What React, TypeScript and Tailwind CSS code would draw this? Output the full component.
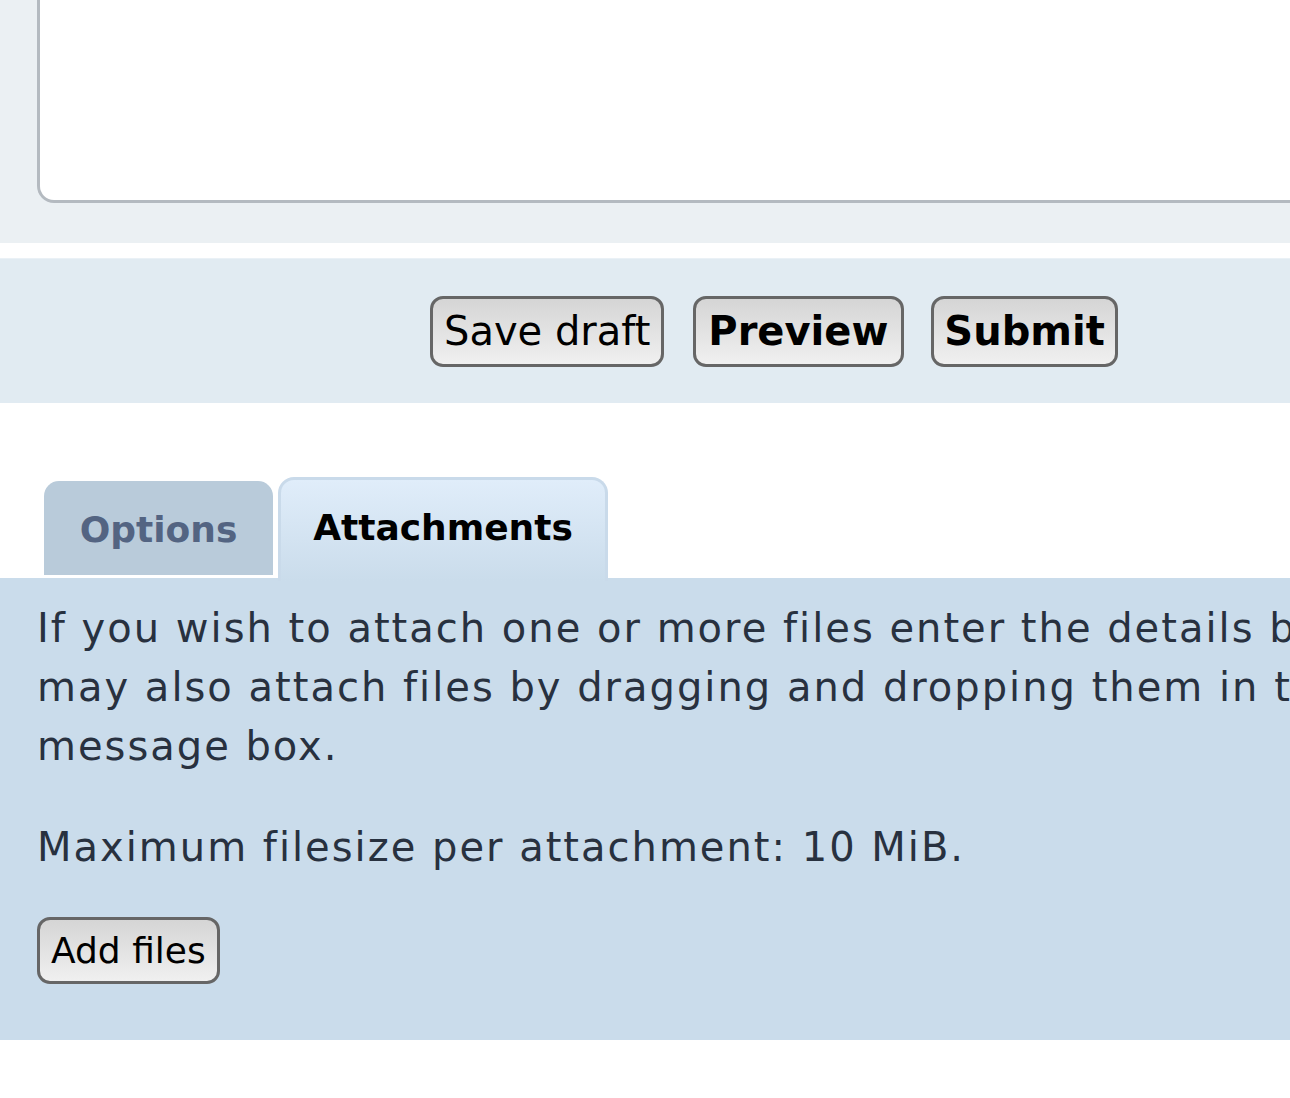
import React from "react";

const font = { fontFamily: '"DejaVu Sans", Verdana, sans-serif' };

function Btn({ children, bold, extra }: { children: React.ReactNode; bold?: boolean; extra?: string }) {
  return (
    <button
      className={
        "h-[71px] rounded-[13px] border-[3px] border-[#666666] bg-gradient-to-b from-[#d5d5d5] to-[#f0f0f0] text-black text-[40px] leading-none " +
        (bold ? "font-bold " : "font-normal ") +
        (extra ?? "px-[11px]")
      }
    >
      {children}
    </button>
  );
}

export default function App() {
  return (
    <div className="w-[1290px] h-[1098px] overflow-hidden bg-white" style={font}>
      <div className="h-[243px] bg-[#ebf0f3] pl-[37px] pb-[40px] flex flex-col justify-end">
        <div className="h-[260px] -mr-[40px] bg-white border-[3px] border-t-0 border-[#b4bac0] rounded-bl-[17px]" />
      </div>
      <div className="h-[15px]" />
      <div className="h-[145px] bg-[#e1ebf2] border-t border-[#eaf1f6] flex items-center pl-[430px]">
        <Btn>Save draft</Btn>
        <div className="w-[29px]" />
        <Btn bold extra="pl-[12px] pr-[13px]">Preview</Btn>
        <div className="w-[27px]" />
        <Btn bold extra="px-[10px]">Submit</Btn>
      </div>
      <div className="h-[71px]" />
      <div className="flex items-end pl-[44px] gap-[5px] h-[104px]">
        <div className="w-[229px] h-[94px] mb-[3px] bg-[#b9cbda] rounded-t-[15px] flex items-start justify-center pt-[31px] text-[36px] leading-none font-bold text-[#536482]">
          Options
        </div>
        <div className="w-[330px] h-[104px] -mb-[3px] rounded-t-[16px] border-[3px] border-b-0 border-[#c9daea] bg-gradient-to-b from-[#e0edfa] to-[#cadceb] flex items-start justify-center pt-[30px] text-[36px] leading-none font-bold text-black">
          Attachments
        </div>
      </div>
      <div className="h-[462px] bg-[#cadceb] pl-[37px] pt-[21px] text-[#28313f] text-[40px] leading-[59px] tracking-[2px] whitespace-nowrap overflow-hidden">
        <p>If you wish to attach one or more files enter the details b</p>
        <p>may also attach files by dragging and dropping them in th</p>
        <p>message box.</p>
        <p className="mt-[42px]">Maximum filesize per attachment: 10 MiB.</p>
        <div className="mt-[40px]">
          <button className="h-[67px] px-[11px] rounded-[13px] border-[3px] border-[#666666] bg-gradient-to-b from-[#d5d5d5] to-[#f0f0f0] text-black text-[36px] leading-none tracking-normal">
            Add files
          </button>
        </div>
      </div>
    </div>
  );
}
